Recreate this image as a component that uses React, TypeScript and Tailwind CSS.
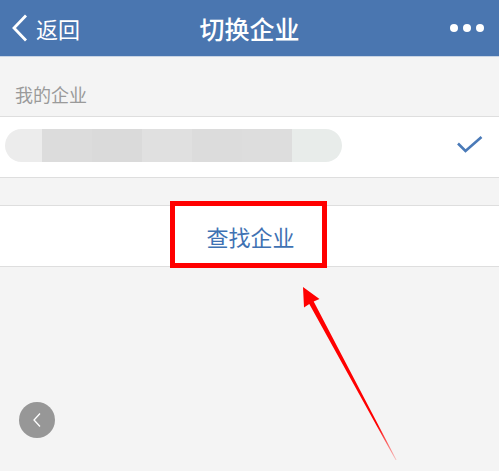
import React from 'react';

const segments = [
    { c: '#ececec', w: 37 },
    { c: '#dcdcdc', w: 50 },
    { c: '#dadada', w: 50 },
    { c: '#e0e0e0', w: 50 },
    { c: '#dcdcdc', w: 50 },
    { c: '#dddddd', w: 50 },
    { c: '#e8ecea', w: 50 },
];

const ArrowOverlay = () => (
    <svg className="absolute left-0 top-0 pointer-events-none" width="499" height="471" viewBox="0 0 499 471">
        <defs>
            <linearGradient id="fade" x1="303" y1="287" x2="396" y2="460" gradientUnits="userSpaceOnUse">
                <stop offset="0" stopColor="#ff0000" />
                <stop offset="0.8" stopColor="#ff0000" />
                <stop offset="1" stopColor="#ff0000" stopOpacity="0.2" />
            </linearGradient>
        </defs>
        <polygon
            points="303,287 319.5,299 313.7,301.6 396.6,460 395.6,460 309.3,304 304,307.5"
            fill="url(#fade)"
        />
    </svg>
);

export default function App() {
    return (
        <div
            className="relative w-[499px] h-[471px] overflow-hidden bg-[#f4f4f4]"
            style={{ fontFamily: '"Noto Sans CJK SC", "Noto Sans", sans-serif' }}
        >
            {/* header */}
            <div className="h-[57px] bg-[#4a76b0] border-b border-[#c8d4e4] flex items-center px-[11px] text-white">
                <div className="flex items-center gap-[8px] w-[120px]">
                    <svg width="17" height="28" viewBox="0 0 17 28" fill="none">
                        <path d="M15 1.5 L3 14 L15 26.5" stroke="white" strokeWidth="2.8" />
                    </svg>
                    <span className="text-[22px] leading-none">返回</span>
                </div>
                <div className="flex-1 text-center text-[25px] leading-none font-medium">切换企业</div>
                <div className="w-[120px] flex justify-end gap-[5px] pr-[4px]">
                    <span className="w-[8px] h-[8px] rounded-full bg-white" />
                    <span className="w-[8px] h-[8px] rounded-full bg-white" />
                    <span className="w-[8px] h-[8px] rounded-full bg-white" />
                </div>
            </div>

            {/* section label */}
            <div className="h-[59px] flex items-end pb-[12px] px-[15px]">
                <span className="text-[18px] leading-[20px] text-[#9a9a9a]">我的企业</span>
            </div>

            {/* current enterprise */}
            <div className="h-[62px] bg-white border-y border-[#dedede] flex items-center pl-[5px] pr-[16px] pb-[4px]">
                <div className="flex h-[33px] rounded-full overflow-hidden">
                    {segments.map((s, i) => (
                        <div key={i} style={{ backgroundColor: s.c, width: s.w }} />
                    ))}
                </div>
                <div className="flex-1" />
                <svg width="26" height="18" viewBox="0 0 26 18" fill="none">
                    <path d="M1 7.5 L8.5 15 L24.5 1" stroke="#4a7ab8" strokeWidth="2.6" />
                </svg>
            </div>

            <div className="h-[27px]" />

            {/* find enterprise */}
            <div className="h-[62px] bg-white border-y border-[#dedede] flex items-center justify-center">
                <span className="text-[22px] leading-none text-[#3f72b3] pl-[2px]">查找企业</span>
            </div>

            {/* annotation box */}
            <div className="absolute left-[170px] top-[201px] w-[157px] h-[67px] border-[5px] border-[#ff0000]" />

            <ArrowOverlay />

            {/* floating back button */}
            <div className="absolute left-[19px] top-[402px] w-[36px] h-[36px] rounded-full bg-[#979797] flex items-center justify-center">
                <svg width="10" height="16" viewBox="0 0 10 16" fill="none">
                    <path d="M8 1.5 L2 8 L8 14.5" stroke="white" strokeWidth="1.3" />
                </svg>
            </div>
        </div>
    );
}
